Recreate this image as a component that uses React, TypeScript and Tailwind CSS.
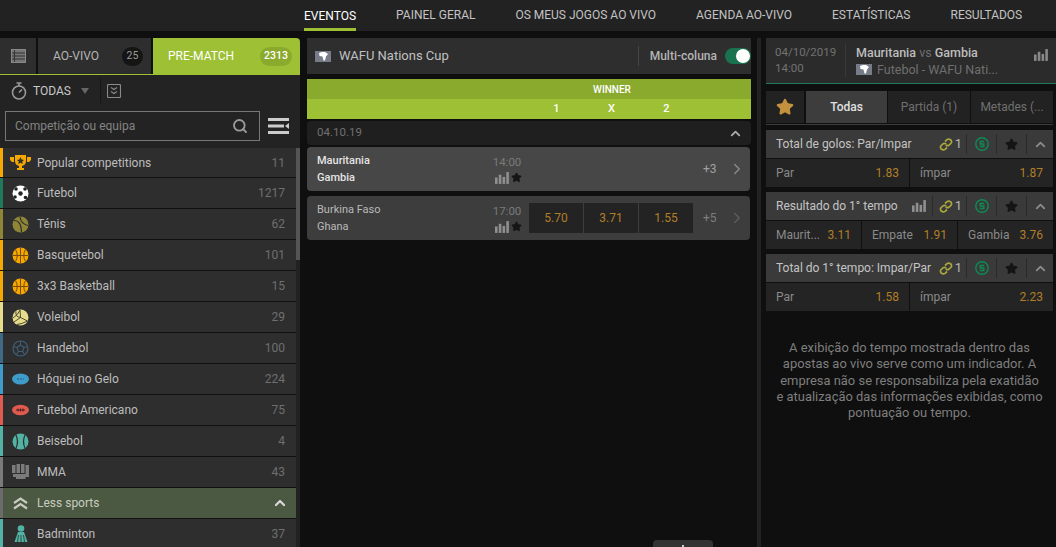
import React from 'react';
import { ChevronRight, ChevronUp, Search, Star } from 'lucide-react';

const navItems = ['EVENTOS', 'PAINEL GERAL', 'OS MEUS JOGOS AO VIVO', 'AGENDA AO-VIVO', 'ESTATÍSTICAS', 'RESULTADOS'];

const Basket = () => (
  <svg width="17" height="17" viewBox="0 0 17 17">
    <circle cx="8.5" cy="8.5" r="8" fill="#f5a800" />
    <path d="M8.5 .5V16.5M.5 8.5H16.5M3.5 2.5Q7 8.5 3.5 14.5M13.5 2.5Q10 8.5 13.5 14.5" stroke="#7a4a10" strokeWidth="1" fill="none" />
  </svg>
);

const Trophy = () => (
  <svg width="21" height="18" viewBox="0 0 21 18">
    <path d="M5 1H16V7Q16 11 12 12V14H14V16H7V14H9V12Q5 11 5 7Z" fill="#f5a800" />
    <path d="M0 3H4V8H2L0 6ZM21 3H17V8H19L21 6Z" fill="#f5a800" />
    <path d="M10.5 3L11.6 5.6L14 6L12.2 7.6L12.8 10L10.5 8.7L8.2 10L8.8 7.6L7 6L9.4 5.6Z" fill="#2e2e2e" />
  </svg>
);

const Soccer = () => (
  <svg width="17" height="17" viewBox="0 0 17 17">
    <circle cx="8.5" cy="8.5" r="8" fill="#fff" />
    <circle cx="8.5" cy="8.5" r="2.2" fill="#222" />
    <circle cx="4" cy="4" r="1.8" fill="#222" />
    <circle cx="13" cy="4" r="1.8" fill="#222" />
    <circle cx="3" cy="12" r="1.8" fill="#222" />
    <circle cx="13.5" cy="12.5" r="1.8" fill="#222" />
  </svg>
);

const Tennis = () => (
  <svg width="17" height="17" viewBox="0 0 17 17">
    <circle cx="8.5" cy="8.5" r="8" fill="#8e8536" />
    <path d="M2 4.5Q9 4 9.5 16M8 1Q9 8 16 9.5" stroke="#2e2e2e" strokeWidth="1.2" fill="none" />
  </svg>
);

const Volley = () => (
  <svg width="17" height="17" viewBox="0 0 17 17">
    <circle cx="8.5" cy="8.5" r="8" fill="#e6dc8c" />
    <path d="M8.5 8.5L8 1M8.5 8.5L2 13M8.5 8.5L15.5 12M4 2.5Q3 8 8.5 8.5M1 9Q6 6 8 1M15.5 12Q10 15 5 15.5" stroke="#3a3a2a" strokeWidth=".9" fill="none" />
  </svg>
);

const Handball = () => (
  <svg width="17" height="17" viewBox="0 0 17 17">
    <circle cx="8.5" cy="8.5" r="7.5" fill="none" stroke="#3f5f78" strokeWidth="1.2" />
    <path d="M8.5 5L12 7.5L10.6 11.5H6.4L5 7.5ZM8.5 5V1.2M12 7.5L15.6 6.5M10.6 11.5L13 15M6.4 11.5L4 15M5 7.5L1.4 6.5" stroke="#3f5f78" strokeWidth="1.1" fill="none" />
  </svg>
);

const Puck = () => (
  <svg width="17" height="12" viewBox="0 0 17 12">
    <ellipse cx="8.5" cy="6" rx="8.5" ry="5.5" fill="#3f9bc9" />
    <path d="M5 6H12" stroke="#1f5f80" strokeWidth="1" strokeDasharray="2 1" />
  </svg>
);

const Football = () => (
  <svg width="17" height="12" viewBox="0 0 17 12">
    <ellipse cx="8.5" cy="6" rx="8.5" ry="5.2" fill="#e05a50" />
    <path d="M4 6H13M6 4.5V7.5M8.5 4.5V7.5M11 4.5V7.5" stroke="#3a1a18" strokeWidth=".9" />
  </svg>
);

const Baseball = () => (
  <svg width="17" height="17" viewBox="0 0 17 17">
    <circle cx="8.5" cy="8.5" r="8" fill="#52b3a4" />
    <path d="M4 2Q7 8.5 4 15M13 2Q10 8.5 13 15" stroke="#2e2e2e" strokeWidth="1.2" fill="none" />
  </svg>
);

const Fist = () => (
  <svg width="17" height="18" viewBox="0 0 17 18">
    <path d="M0 2H3.5V10H0ZM4.5 1H8V10H4.5ZM9 1H12.5V10H9ZM13.5 2H17V14H13.5V16H4V14H1V11H13.5Z" fill="#7b7b7b" />
  </svg>
);

const Chevrons = () => (
  <svg width="15" height="13" viewBox="0 0 15 13">
    <path d="M1 6L7.5 1.5L14 6M1 11.5L7.5 7L14 11.5" stroke="#c8ccc0" strokeWidth="2.2" fill="none" />
  </svg>
);

const Shuttle = () => (
  <svg width="14" height="18" viewBox="0 0 14 18">
    <circle cx="7" cy="3.5" r="3.3" fill="#52b3a4" />
    <path d="M4 7H10L13.5 17H.5Z" fill="#52b3a4" />
    <path d="M4.5 10L3.5 17M7 10V17M9.5 10L10.5 17" stroke="#2e2e2e" strokeWidth=".8" />
  </svg>
);

const sports = [
  { name: 'Popular competitions', count: '11', bar: 'bg-[#f5a800]', icon: <Trophy /> },
  { name: 'Futebol', count: '1217', bar: 'bg-[#1f7a5c]', icon: <Soccer /> },
  { name: 'Ténis', count: '62', bar: 'bg-[#8e8536]', icon: <Tennis /> },
  { name: 'Basquetebol', count: '101', bar: 'bg-[#f5a800]', icon: <Basket /> },
  { name: '3x3 Basketball', count: '15', bar: 'bg-[#f5a800]', icon: <Basket /> },
  { name: 'Voleibol', count: '29', bar: 'bg-[#e6dc8c]', icon: <Volley /> },
  { name: 'Handebol', count: '100', bar: 'bg-[#3f6a85]', icon: <Handball /> },
  { name: 'Hóquei no Gelo', count: '224', bar: 'bg-[#3f9bc9]', icon: <Puck /> },
  { name: 'Futebol Americano', count: '75', bar: 'bg-[#e05a50]', icon: <Football /> },
  { name: 'Beisebol', count: '4', bar: 'bg-[#52b3a4]', icon: <Baseball /> },
  { name: 'MMA', count: '43', bar: 'bg-[#7b7b7b]', icon: <Fist /> },
];

const ListIcon = () => (
  <svg width="15" height="14" viewBox="0 0 15 14">
    <rect x=".5" y=".5" width="14" height="13" fill="#777" stroke="#888" />
    <path d="M3.5 1V13M1 4H14M1 7H14M1 10H14" stroke="#333" strokeWidth="1" />
  </svg>
);

const Stopwatch = () => (
  <svg width="16" height="18" viewBox="0 0 16 18" fill="none" stroke="#9a9a9a" strokeWidth="1.6">
    <circle cx="8" cy="10.5" r="6.5" />
    <path d="M5.5 1H10.5M8 1V4M8 10.5L11 7.5" />
  </svg>
);

const CheckBox = () => (
  <svg width="14" height="14" viewBox="0 0 14 14" fill="none" stroke="#8a8a8a" strokeWidth="1.1">
    <rect x=".5" y=".5" width="13" height="13" rx="1" />
    <path d="M4 3.5L7 5.5L10 3.5M4 7.5L7 9.5L10 7.5" />
  </svg>
);

const MenuIcon = () => (
  <svg width="21" height="16" viewBox="0 0 21 16" fill="#ccc">
    <rect width="21" height="3" />
    <rect y="6.5" width="16" height="3" />
    <path d="M21 5V11L17 8Z" />
    <rect y="13" width="21" height="3" />
  </svg>
);

const Africa = () => (
  <span className="flex h-[11px] w-4 items-center justify-center bg-[#777c88]">
    <svg width="10" height="9" viewBox="0 0 10 9">
      <path d="M1 1L4 0H7L10 2L8 4.5L7 8.5H5.5L4.5 4.5L1.5 4Z" fill="#fff" />
    </svg>
  </span>
);

const Bars = ({ color = '#8f8f8f' }: { color?: string }) => (
  <svg width="14" height="12" viewBox="0 0 13 11" fill={color}>
    <rect y="5" width="2.4" height="6" />
    <rect x="3.5" y="2.5" width="2.4" height="8.5" />
    <rect x="7" y="4.5" width="2.4" height="6.5" />
    <rect x="10.5" y="0" width="2.4" height="11" />
  </svg>
);

const LinkCount = () => (
  <span className="flex items-center gap-[2px]">
    <svg width="14" height="13" viewBox="0 0 14 13" fill="none" stroke="#a9a83c" strokeWidth="1.7">
      <path d="M6 3.5L8 1.7Q9.5 .5 11.5 1.7Q13.3 3.5 12 5.3L9.8 7.3Q8.2 8.2 6.8 7" />
      <path d="M8 9.5L6 11.3Q4.5 12.5 2.5 11.3Q.7 9.5 2 7.7L4.2 5.7Q5.8 4.8 7.2 6" />
    </svg>
    <span className="text-[13px] text-[#b5b5b5]">1</span>
  </span>
);

const Cashout = () => (
  <svg width="14" height="14" viewBox="0 0 14 14" fill="none" stroke="#0f8a55" strokeWidth="1.4">
    <circle cx="7" cy="7" r="6.2" />
    <path d="M9.2 4.5H5.2V7H8.8V9.5H4.8" />
  </svg>
);

const Market = ({ title, bars, odds }: { title: string; bars?: boolean; odds: [string, string][] }) => (
  <div className="mb-[5px]">
    <div className="flex h-[28px] items-center bg-[#3a3a3a] pl-[10px]">
      <span className="min-w-0 flex-1 text-[12px] whitespace-nowrap text-[#c4c4c4]">{title}</span>
      {bars && (
        <span className="mr-[6px]">
          <Bars />
        </span>
      )}
      {bars && <span className="mr-[6px] h-5 w-px bg-[#2a2a2a]" />}
      <LinkCount />
      <span className="ml-[4px] h-5 w-px bg-[#2a2a2a]" />
      <span className="flex w-[29px] justify-center">
        <Cashout />
      </span>
      <span className="h-5 w-px bg-[#2a2a2a]" />
      <span className="flex w-[29px] justify-center">
        <Star size={13} fill="#151515" stroke="#151515" />
      </span>
      <span className="h-5 w-px bg-[#2a2a2a]" />
      <span className="flex w-[26px] justify-center">
        <ChevronUp size={15} strokeWidth={3} className="text-[#8a8a8a]" />
      </span>
    </div>
    <div className="mt-px flex h-[28px] gap-px">
      {odds.map(([label, value]) => (
        <div key={label} className="flex flex-1 basis-0 items-center justify-between bg-[#242424] px-[10px] text-[12px]">
          <span className="text-[#8a8a8a]">{label}</span>
          <span className="text-[#b27f28]">{value}</span>
        </div>
      ))}
    </div>
  </div>
);

const MatchRow = ({ home, away, time, more, odds, active }: { home: string; away: string; time: string; more: string; odds?: string[]; active?: boolean }) => (
  <div className={`flex h-[44px] w-[443px] items-center rounded-sm ${active ? 'bg-[#474747]' : 'bg-[#3d3d3d]'}`}>
    <div className={`flex w-[186px] flex-col gap-[1px] pl-[10px] text-[11px] leading-[16px] ${active ? 'font-medium text-[#e4e4e4]' : 'text-[#b9b9b9]'}`}>
      <span>{home}</span>
      <span>{away}</span>
    </div>
    <div className="flex w-[28px] flex-col items-center gap-[2px] text-[11.5px] leading-[15px] text-[#7a7a7a]">
      <span>{time}</span>
      <span className="flex items-center gap-[2px] pl-[2px]">
        <Bars />
        <Star size={11} fill="#151515" stroke="#151515" />
      </span>
    </div>
    <div className="ml-2 flex h-[30px] w-[164px] gap-px">
      {odds?.map((o) => (
        <span key={o} className="flex flex-1 items-center justify-center bg-[#232323] text-[12px] text-[#b27f28]">
          {o}
        </span>
      ))}
    </div>
    <span className={`ml-[10px] text-[12px] ${active ? 'text-[#a0a0a0]' : 'text-[#7e7e7e]'}`}>{more}</span>
    <ChevronRight size={18} className={`ml-[11px] ${active ? 'text-[#888]' : 'text-[#5c5c5c]'}`} />
  </div>
);

export default function App() {
  return (
    <div className="relative flex h-[547px] w-[1056px] flex-col overflow-hidden bg-[#0f0f0f] font-['Roboto',sans-serif]">
      <nav className="flex h-[31px] items-stretch gap-[40px] bg-[#222222] pl-[304px]">
        {navItems.map((item, i) => (
          <span
            key={item}
            className={`flex items-center text-[12px] ${i === 0 ? 'border-b-[3px] border-[#9dc034] pt-[3px] text-white' : 'pb-[1px] text-[#c3c3c3]'}`}
          >
            {item}
          </span>
        ))}
      </nav>

      <div className="mt-[7px] flex min-h-0 flex-1">
        {/* left column */}
        <aside className="flex w-[300px] shrink-0 flex-col bg-[#232323]">
          <div className="flex h-[37px] gap-[2px] border-b border-[#9dc034] bg-[#0f0f0f]">
            <span className="flex w-[36px] items-center justify-center bg-[#2e2e2e]">
              <ListIcon />
            </span>
            <span className="flex w-[113px] items-center justify-between bg-[#2e2e2e] pl-[15px] pr-2 text-[12px] text-[#b5b5b5]">
              AO-VIVO
              <span className="flex h-[19px] w-[21px] items-center justify-center rounded-full bg-[#151515] text-[10.5px] text-[#9a9a9a]">25</span>
            </span>
            <span className="flex flex-1 items-center justify-between rounded-tr-sm bg-[#9dc034] pl-[15px] pr-2 text-[12px] text-white">
              PRE-MATCH
              <span className="flex h-[19px] w-8 items-center justify-center rounded-full bg-[#8aaa2e] text-[10.5px] font-medium">2313</span>
            </span>
          </div>
          <div className="flex h-[36px] items-center pb-[4px] pl-[11px]">
            <Stopwatch />
            <span className="ml-[6px] text-[12px] text-[#c8c8c8]">TODAS</span>
            <span className="ml-[10px] h-0 w-0 border-x-[4px] border-t-[6px] border-x-transparent border-t-[#666]" />
            <span className="ml-[11px] mr-[6px] h-6 w-px bg-[#161616]" />
            <CheckBox />
          </div>
          <div className="ml-[5px] flex h-[30px] items-center gap-2">
            <div className="flex h-[30px] w-[255px] items-center justify-between border border-[#777] pl-[9px] pr-[11px] text-[12px] text-[#848484]">
              Competição ou equipa
              <Search size={16} strokeWidth={2.8} className="text-[#9a9a9a]" />
            </div>
            <MenuIcon />
          </div>
          <div className="mt-[7px] flex min-h-0 flex-1 bg-[#111111]">
            <ul className="flex w-[296px] flex-col gap-px">
              {sports.map((s) => (
                <li key={s.name} className="flex h-[30px] shrink-0 items-center bg-[#2e2e2e] first:h-[29px]">
                  <span className={`h-full w-[3px] ${s.bar}`} />
                  <span className="flex w-[34px] justify-center pl-[1px]">{s.icon}</span>
                  <span className="text-[12px] text-[#bdbdbd]">{s.name}</span>
                  <span className="ml-auto pr-[11px] text-[12px] text-[#6f6f6f]">{s.count}</span>
                </li>
              ))}
              <li className="flex h-[30px] shrink-0 items-center bg-[#4c5942]">
                <span className="h-full w-[3px] bg-[#6b6b6b]" />
                <span className="flex w-[34px] justify-center pl-[1px]">
                  <Chevrons />
                </span>
                <span className="text-[12px] text-[#c8ccc0]">Less sports</span>
                <ChevronUp size={16} strokeWidth={3.4} className="ml-auto mr-[8px] text-[#d8d8d8]" />
              </li>
              <li className="flex h-[30px] shrink-0 items-center bg-[#2e2e2e]">
                <span className="h-full w-[3px] bg-[#52b3a4]" />
                <span className="flex w-[34px] justify-center pl-[1px]">
                  <Shuttle />
                </span>
                <span className="text-[12px] text-[#bdbdbd]">Badminton</span>
                <span className="ml-auto pr-[11px] text-[12px] text-[#6f6f6f]">37</span>
              </li>
            </ul>
            <div className="w-[4px] bg-[#222]">
              <div className="h-[112px] bg-[#555]" />
            </div>
          </div>
        </aside>

        {/* center column */}
        <main className="ml-[7px] flex w-[444px] shrink-0 flex-col">
          <div className="flex h-[36px] items-center bg-[#2e2e2e] pl-2">
            <Africa />
            <span className="ml-2 flex-1 text-[13px] text-[#c0c0c0]">WAFU Nations Cup</span>
            <span className="mr-[11px] h-5 w-px bg-[#454545]" />
            <span className="text-[12px] font-medium text-[#b5b5b5]">Multi-coluna</span>
            <span className="ml-2 flex h-4 w-[26px] items-center justify-end rounded-full bg-[#1a7350] pr-[1px]">
              <span className="h-[14px] w-[14px] rounded-full bg-white" />
            </span>
          </div>
          <div className="mt-[5px] bg-[#9dc034] text-[11px] font-medium text-white">
            <div className="flex h-[20px] items-center justify-center bg-[#8aaa2e] pl-[166px] text-[10px]">WINNER</div>
            <div className="flex h-[20px] items-center pl-[222px]">
              <span className="w-[55px] text-center">1</span>
              <span className="w-[55px] text-center">X</span>
              <span className="w-[55px] text-center">2</span>
            </div>
          </div>
          <div className="mt-[2px] flex h-[24px] items-center justify-between rounded-sm bg-[#1f1f1f] pl-[10px] pr-[8px] text-[11.5px] text-[#707070]">
            04.10.19
            <ChevronUp size={15} strokeWidth={3} className="text-[#a8a8a8]" />
          </div>
          <div className="mt-[2px] flex flex-col gap-[5px]">
            <MatchRow home="Mauritania" away="Gambia" time="14:00" more="+3" active />
            <MatchRow home="Burkina Faso" away="Ghana" time="17:00" more="+5" odds={['5.70', '3.71', '1.55']} />
          </div>
        </main>

        <div className="ml-[6px] w-[4px] shrink-0 bg-[#222]" />

        {/* right column */}
        <section className="ml-[5px] flex min-w-0 flex-1 flex-col">
          <div className="flex h-[46px] items-center border-b border-[#1f7a5c] bg-[#2b2b2b]">
            <div className="flex w-[79px] flex-col gap-[1px] pl-[9px] text-[11.5px] leading-[15px] text-[#727272]">
              <span>04/10/2019</span>
              <span>14:00</span>
            </div>
            <span className="h-[33px] w-px bg-[#3a3a3a]" />
            <div className="ml-[10px] flex min-w-0 flex-1 flex-col text-[12.5px] leading-[17px]">
              <span className="text-[#bdbdbd]">
                <span className="font-medium">Mauritania</span> <span className="text-[#6f6f6f]">vs</span> <span className="font-medium">Gambia</span>
              </span>
              <span className="flex items-center gap-[5px] text-[#6f6f6f]">
                <Africa />
                Futebol - WAFU Nati...
              </span>
            </div>
            <span className="mb-[12px] mr-[8px]">
              <Bars color="#888" />
            </span>
          </div>
          <div className="mr-[3px] mt-[7px] flex h-[34px] gap-[1px] border-b border-[#3c3c3c] pb-[1px] text-[12px] text-[#707070]">
            <span className="flex w-[38px] items-center justify-center bg-[#222]">
              <Star size={18} fill="#c4913e" stroke="#c4913e" />
            </span>
            <span className="ml-[1px] flex w-[81px] items-center justify-center bg-[#3d3d3d] font-medium text-[#e0e0e0]">Todas</span>
            <span className="flex w-[82px] items-center justify-center bg-[#222]">Partida (1)</span>
            <span className="flex w-[82px] items-center justify-center bg-[#222]">Metades (...</span>
          </div>
          <div className="mr-[3px] mt-[5px]">
            <Market title="Total de golos: Par/Impar" odds={[['Par', '1.83'], ['ímpar', '1.87']]} />
            <Market title="Resultado do 1° tempo" bars odds={[['Maurit...', '3.11'], ['Empate', '1.91'], ['Gambia', '3.76']]} />
            <Market title="Total do 1° tempo: Impar/Par" odds={[['Par', '1.58'], ['ímpar', '2.23']]} />
          </div>
          <p className="mt-[24px] mr-[3px] text-center text-[12.95px] leading-[16.25px] whitespace-nowrap text-[#7e7e7e]">
            A exibição do tempo mostrada dentro das
            <br />
            apostas ao vivo serve como um indicador. A
            <br />
            empresa não se responsabiliza pela exatidão
            <br />
            e atualização das informações exibidas, como
            <br />
            pontuação ou tempo.
          </p>
        </section>
      </div>

      <div className="absolute bottom-0 left-[653px] flex h-[7px] w-[60px] justify-center rounded-t-sm bg-[#333]">
        <span className="mt-[5px] h-[2px] w-[2px] bg-[#ccc]" />
      </div>
    </div>
  );
}
